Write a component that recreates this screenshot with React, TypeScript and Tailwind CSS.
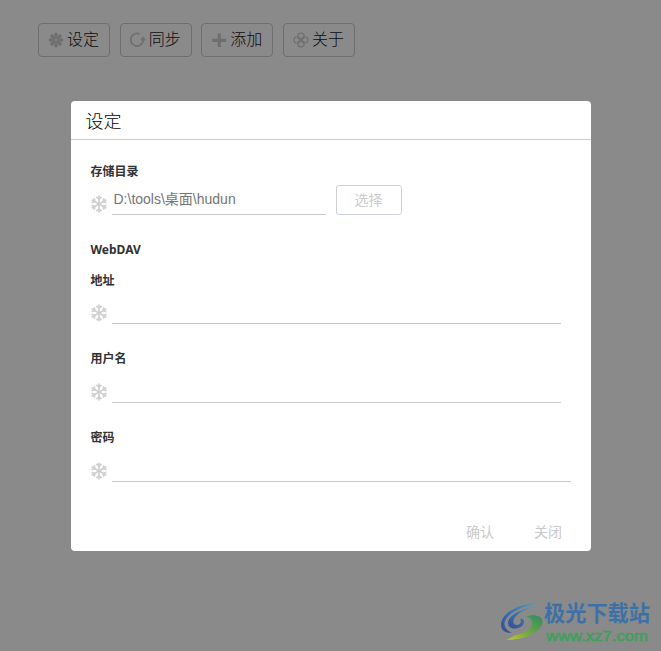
import React from "react";

const ANGLES8 = [0, 45, 90, 135, 180, 225, 270, 315];

function Snowflake() {
  return (
    <svg width="18" height="18" viewBox="-9 -9 18 18" className="block shrink-0" fill="none" stroke="#d0d0d3" strokeWidth="1.7">
      {[0, 60, 120, 180, 240, 300].map((a) => (
        <path key={a} transform={`rotate(${a})`} d="M0 0V-8.5M-2.6 -7.1L0 -4.7L2.6 -7.1" />
      ))}
    </svg>
  );
}

function GearFlower() {
  return (
    <svg width="16" height="16" viewBox="-8 -8 16 16" className="block shrink-0" fill="#6e6e6e">
      {ANGLES8.map((a) => (
        <path key={a} transform={`rotate(${a})`} d="M-.5 -1L-1.8 -5.4Q-1.9 -7.3 0 -7.3Q1.9 -7.3 1.8 -5.4L.5 -1Z" />
      ))}
    </svg>
  );
}

function Refresh() {
  return (
    <svg width="16" height="16" viewBox="0 0 16 16" className="block shrink-0">
      <path d="M9.6 2A6.3 6.3 0 1 0 13.3 8.4" fill="none" stroke="#707070" strokeWidth="1.8" />
      <path d="M10.3 7.9L13.1 4.2L15.9 7.5L13.4 9.6Z" fill="#707070" />
    </svg>
  );
}

function Plus() {
  return (
    <svg width="16" height="16" viewBox="0 0 16 16" className="block shrink-0">
      <path d="M8.3 1.5V15M1.3 8.3H15.2" stroke="#6e6e6e" strokeWidth="3.2" />
    </svg>
  );
}

function Clover() {
  return (
    <svg width="16" height="16" viewBox="-8 -8 16 16" className="block shrink-0" fill="none" stroke="#707070" strokeWidth="1.3">
      {[0, 90, 180, 270].map((a) => (
        <path key={a} transform={`rotate(${a})`} d="M0 -.8L-2.7 -3.2C-3.6 -5.2 -2.6 -6.8 0 -6.8C2.6 -6.8 3.6 -5.2 2.7 -3.2Z" />
      ))}
    </svg>
  );
}

function ToolButton({ icon, label }: { icon: React.ReactNode; label: string }) {
  return (
    <div className="flex h-[34px] w-[72px] items-center gap-[3px] rounded-[4px] border border-[#6d6e70] pl-[9px] text-[16px] leading-[32px] font-light text-[#0c0c0e]">
      {icon}
      <span className="-mt-[2px] whitespace-nowrap">{label}</span>
    </div>
  );
}

function Label({ children }: { children: React.ReactNode }) {
  return <div className="-ml-[0.5px] h-5 pt-px text-[12px] leading-5 font-bold text-[#303133]">{children}</div>;
}

function Field({ width, height }: { width: string; height: string }) {
  return (
    <div className={`flex items-end gap-1 ${height}`}>
      <div className="mb-[2px] -ml-px">
        <Snowflake />
      </div>
      <div className={`h-[30px] border-b border-[#c9c9c9] ${width}`} />
    </div>
  );
}

function SiteMark() {
  return (
    <div className="absolute top-[599px] left-[501px] flex">
      <svg width="44" height="44" viewBox="0 0 44 44" className="block shrink-0">
        <defs>
          <linearGradient id="sweep" x1="0" y1="1" x2="1" y2="0">
            <stop offset="0" stopColor="#344c92" />
            <stop offset=".45" stopColor="#386fae" />
            <stop offset="1" stopColor="#4aa5c9" />
          </linearGradient>
          <linearGradient id="leaf" x1="0" y1="1" x2="1" y2="0">
            <stop offset="0" stopColor="#c4c837" />
            <stop offset=".4" stopColor="#78ab3d" />
            <stop offset="1" stopColor="#2d8b64" />
          </linearGradient>
        </defs>
        <path d="M41 4C23 3 1 12 0 25C-.3 31 4 34 11 34C5 31 2 27 4 22C8 13 23 6 41 4Z" fill="url(#sweep)" />
        <path d="M36 7C22 9 7 16 7 24C7 32 22 31 23 23C23.4 20 21 19.5 19 20C21 22 19.5 26 16 26C12.5 26 11.5 23 13 20C16 14 26 9 36 7Z" fill="url(#sweep)" />
        <path d="M24 18C33 14.5 41 17 41.5 22C42 31 25 42 4 40.5C9 40 11 38 13 36.5C22 35 31 30 31 24C31 20 28.5 18 24 18Z" fill="url(#leaf)" />
      </svg>
      <div className="flex flex-col whitespace-nowrap">
        <div className="-ml-px h-[28px] text-[21.2px] leading-[28px] font-bold text-[#3c71a8]">极光下载站</div>
        <svg width="108" height="18" viewBox="0 0 108 18" className="block">
          <text x="1" y="13.5" textLength="102" lengthAdjust="spacingAndGlyphs" fontFamily="Liberation Sans, Arial, sans-serif" fontSize="15.5" fill="#3fa05b" stroke="#3fa05b" strokeWidth=".6">www.xz7.com</text>
        </svg>
      </div>
    </div>
  );
}

export default function App() {
  return (
    <div className="relative h-[651px] w-[661px] overflow-hidden bg-[#8a8a8a] font-['Noto_Sans','Noto_Sans_CJK_SC',sans-serif]">
      <div className="flex gap-[9.67px] pt-[23px] pl-[38px]">
        <ToolButton icon={<GearFlower />} label="设定" />
        <ToolButton icon={<Refresh />} label="同步" />
        <ToolButton icon={<Plus />} label="添加" />
        <ToolButton icon={<Clover />} label="关于" />
      </div>

      <div className="mt-[44px] ml-[71px] flex h-[450px] w-[520px] flex-col rounded-[4px] bg-white">
        <div className="h-[39px] shrink-0 border-b border-[#cccccc] pt-px pl-[14.5px] text-[18px] leading-[38px] font-light text-black">设定</div>
        <div className="flex flex-col pt-[21px] pl-5">
          <Label>存储目录</Label>
          <div className="flex h-[34px] items-end">
            <div className="mb-[2px] -ml-px">
              <Snowflake />
            </div>
            <div className="ml-1 h-[31px] w-[214px] border-b border-[#c9c9c9] pt-px pl-[1.5px] font-['Liberation_Sans','Noto_Sans_CJK_SC',sans-serif] text-[14px] leading-[29px] text-[#757575]">
              D:\tools\桌面\hudun
            </div>
            <div className="ml-[10px] h-[30px] w-[66px] rounded-[3px] border border-[#ccd0da] pr-px text-center text-[14px] leading-[28px] text-[#cccccc]">选择</div>
          </div>
          <div className="mt-[24px]">
            <Label>WebDAV</Label>
          </div>
          <div className="mt-[11px]">
            <Label>地址</Label>
          </div>
          <Field width="w-[449px]" height="h-[34px]" />
          <div className="mt-6">
            <Label>用户名</Label>
          </div>
          <Field width="w-[449px]" height="h-[35px]" />
          <div className="mt-6">
            <Label>密码</Label>
          </div>
          <Field width="w-[459px]" height="h-[35px]" />
        </div>
        <div className="mt-10 flex justify-end gap-10 pr-[29px] text-[14px] leading-5 text-[#c9c9c9]">
          <span>确认</span>
          <span>关闭</span>
        </div>
      </div>
      <SiteMark />
    </div>
  );
}
